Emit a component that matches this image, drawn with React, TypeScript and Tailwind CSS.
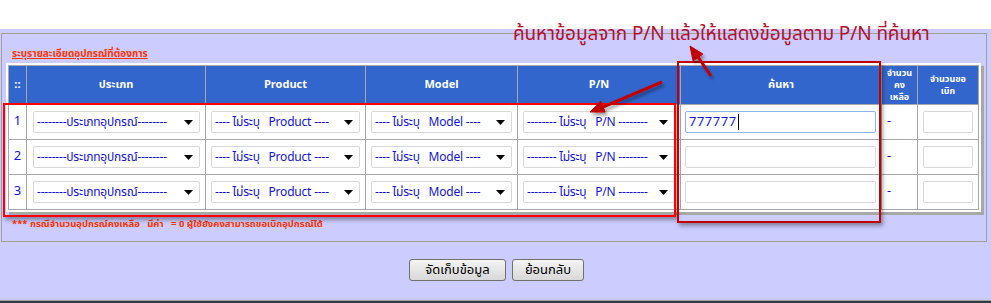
import React from "react";

const FONT = 'Tahoma, "Noto Sans Thai", "Liberation Sans", "Noto Sans", "DejaVu Sans", sans-serif';

const cols = "grid grid-cols-[18px_179px_160px_152px_163px_201px_36px_61px]";

function Select({ label }: { label: string }) {
  return (
    <div className="flex h-[22px] w-full items-center justify-between overflow-hidden rounded-[2px] border border-[#d8d8d8] bg-white pl-[3px] pr-[6px]">
      <span className="whitespace-pre text-[12px] leading-[16px] tracking-[-0.2px] text-[#1414d2]">{label}</span>
      <svg width="9" height="5" viewBox="0 0 9 5" className="shrink-0">
        <path d="M0 0 L9 0 L4.5 5 Z" fill="#000" />
      </svg>
    </div>
  );
}

function Row({ n, value, focused }: { n: number; value: string; focused?: boolean }) {
  const cell = "flex h-[35px] items-center border-l border-t border-[#a8a8a8] bg-white";
  return (
    <>
      <div className={`${cell} justify-center text-[13px] text-[#1414d2]`}>{n}</div>
      <div className={`${cell} pl-[6px] pr-[5px]`}>
        <Select label="--------ประเภทอุปกรณ์--------" />
      </div>
      <div className={`${cell} pl-[5px] pr-[5px]`}>
        <Select label="---- ไม่ระบุ   Product ----" />
      </div>
      <div className={`${cell} pl-[5px] pr-[5px]`}>
        <Select label="---- ไม่ระบุ   Model ----" />
      </div>
      <div className={`${cell} pl-[5px] pr-[5px]`}>
        <Select label="-------- ไม่ระบุ   P/N --------" />
      </div>
      <div className={`${cell} pl-[4px] pr-[5px]`}>
        <div
          className={`flex h-[22px] w-full items-center rounded-[2px] border bg-white pl-[3px] ${
            focused ? "border-[#8ab8e6]" : "border-[#d8d8d8]"
          }`}
        >
          <span className="text-[13px] leading-[16px] tracking-[0.5px] text-[#1414d2]">{value}</span>
          {focused && <span className="ml-[1px] h-[16px] w-[1px] bg-black" />}
        </div>
      </div>
      <div className={`${cell} justify-start pl-[5px] text-[13px] text-[#1414d2]`}>-</div>
      <div className={`${cell} pl-[5px] pr-[5px]`}>
        <div className="h-[22px] w-full rounded-[2px] border border-[#d8d8d8] bg-white" />
      </div>
    </>
  );
}

export default function App() {
  const head = "flex h-[39px] items-center justify-center border-l border-t border-[#a8a8a8] bg-[#3366cc] text-center text-[11px] font-bold leading-[12px] text-white";
  const headSmall = "flex h-[39px] flex-col items-center justify-center border-l border-t border-[#a8a8a8] bg-[#3366cc] text-center text-[9px] font-bold leading-[12px] text-white";
  return (
    <div className="relative h-[303px] w-[991px] overflow-hidden bg-white" style={{ fontFamily: FONT }}>
      <div className="h-[29px] bg-white" />
      <div className="flex h-[274px] flex-col bg-[#ccccff]">
        <div className="ml-[1px] mt-[4px] h-[209px] w-[986px] border border-[#a0a0a0] pl-[4px]">
          <div className="h-[29px] pl-[6px] pt-[13px] text-[10px] font-bold leading-[14px] text-[#ff3300] underline">
            ระบุรายละเอียดอุปกรณ์ที่ต้องการ
          </div>
          <div className="w-[975px] bg-white p-[2px] shadow-[3px_3px_0_#a8a8a8]">
            <div className={`${cols} border-b border-r border-[#a8a8a8]`}>
              <div className={head}>::</div>
              <div className={head}>ประเภท</div>
              <div className={head}>Product</div>
              <div className={head}>Model</div>
              <div className={head}>P/N</div>
              <div className={head}>ค้นหา</div>
              <div className={headSmall}>
                <span>จำนวน</span>
                <span>คง</span>
                <span>เหลือ</span>
              </div>
              <div className={headSmall}>
                <span>จำนวนขอ</span>
                <span>เบิก</span>
              </div>
              <Row n={1} value="777777" focused />
              <Row n={2} value="" />
              <Row n={3} value="" />
            </div>
          </div>
          <div className="mt-[6px] pl-[6px] text-[9.5px] font-bold leading-[12px] text-[#ff3300]">
            *** กรณีจำนวนอุปกรณ์คงเหลือ&nbsp;&nbsp; มีค่า&nbsp;&nbsp; = 0 ผู้ใช้ยังคงสามารถขอเบิกอุปกรณ์ได้
          </div>
        </div>
        <div className="mt-[17px] flex justify-center gap-[6px] pl-[2px]">
          <button className="h-[22px] w-[97px] rounded-[3px] border border-[#707070] bg-gradient-to-b from-[#f4f4f4] to-[#d8d8d8] text-[13px] leading-[18px] text-black">
            จัดเก็บข้อมูล
          </button>
          <button className="h-[22px] w-[72px] rounded-[3px] border border-[#707070] bg-gradient-to-b from-[#f4f4f4] to-[#d8d8d8] text-[13px] leading-[18px] text-black">
            ย้อนกลับ
          </button>
        </div>
        <div className="mt-auto h-[3px] bg-[#a0a0a0]" />
      </div>
      <div className="absolute bottom-0 left-0 h-[2px] w-full bg-[#2e3c4a]" />

      {/* annotation overlays */}
      <div className="absolute left-[3px] top-[103px] h-[114px] w-[673px] border-2 border-[#ff0000] shadow-[2px_3px_4px_rgba(0,0,0,0.35)]" />
      <div className="absolute left-[677px] top-[61px] h-[162px] w-[204px] border-2 border-[#c00000] shadow-[2px_3px_4px_rgba(0,0,0,0.35)]" />
      <div className="absolute left-[513px] top-[22px] whitespace-nowrap text-[19px] leading-[26px] tracking-[-0.1px] text-[#b3122b]">
        ค้นหาข้อมูลจาก P/N แล้วให้แสดงข้อมูลตาม P/N ที่ค้นหา
      </div>
      <svg className="pointer-events-none absolute left-0 top-0" width="991" height="303">
        <defs>
          <filter id="sh" x="-20%" y="-20%" width="140%" height="140%">
            <feDropShadow dx="2" dy="3" stdDeviation="1.5" floodColor="#000" floodOpacity="0.35" />
          </filter>
        </defs>
        <g filter="url(#sh)" fill="#c00000" stroke="#c00000">
          <line x1="662" y1="82" x2="603" y2="107" strokeWidth="3" />
          <path d="M590 112 L600.6 101.1 L605.2 112.1 Z" strokeWidth="1" />
          <line x1="711" y1="76" x2="698" y2="57" strokeWidth="3" />
          <path d="M690 46 L702.9 54.1 L693.1 60.9 Z" strokeWidth="1" />
        </g>
      </svg>
    </div>
  );
}
